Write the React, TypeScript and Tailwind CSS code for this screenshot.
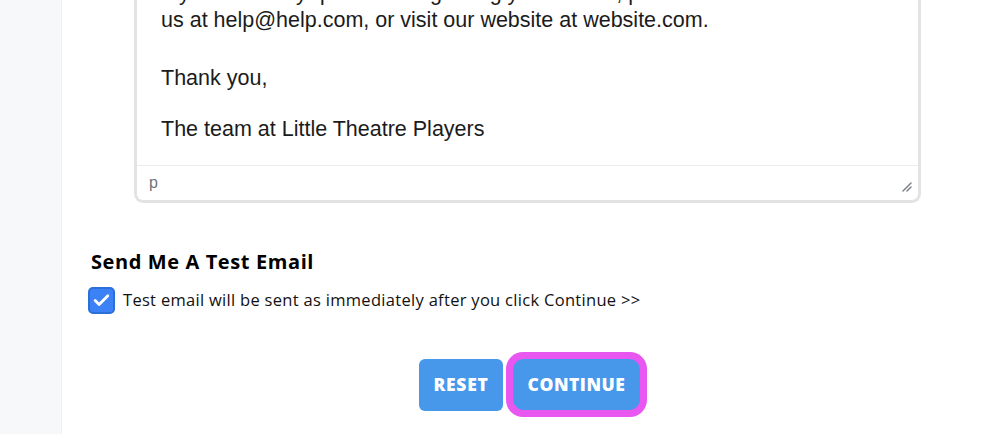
import { Check } from "lucide-react";

const sans = "font-['Liberation_Sans',Arial,sans-serif]";
const poppins = "font-['Open_Sans','Noto_Sans',sans-serif]";

function Editor() {
  return (
    <div className="ml-[72px] w-[787px] rounded-b-[9px] border-x-[3px] border-b-[3px] border-[#e3e3e3] bg-white">
      {/* body, scrolled so the first line is mostly out of view */}
      <div className={`${sans} px-[24px] pb-[22px] text-[21.5px] leading-[27px] text-[#1b1b1b]`}>
        <p>If you have any questions regarding your tickets, please feel free to contact</p>
        <p>us at help@help.com, or visit our website at website.com.</p>
        <p className="mt-[31px]">Thank you,</p>
        <p className="mt-[24px]">The team at Little Theatre Players</p>
      </div>
      <div className="flex h-[35px] items-center justify-between border-t border-[#ececec] pl-[12px] pr-[6px]">
        <span className={`${sans} text-[16px] text-[#6f737a]`}>p</span>
        <svg width="12" height="12" viewBox="0 0 12 12" className="mt-[6px]">
          <path d="M11 3 L3 11 M11 7 L7 11" stroke="#7d8087" strokeWidth="1.5" strokeLinecap="round" />
        </svg>
      </div>
    </div>
  );
}

export default function App() {
  return (
    <div className="flex h-[448px] w-[1004px] overflow-hidden bg-white">
      <div className="h-[434px] w-[62px] shrink-0 border-r border-[#eef0f3] bg-[#f7f8fa]" />
      <div className="flex-1">
        <div className="-mt-[20px]">
          <Editor />

          <h2 className={`${poppins} ml-[29px] mt-[45px] text-[20px] font-bold leading-[28px] tracking-[0.6px] text-black`}>
            Send Me A Test Email
          </h2>

          <label className="ml-[26px] mt-[11px] flex items-center gap-[8px]">
            <span className="flex h-[27px] w-[27px] items-center justify-center rounded-[5px] border-[2px] border-[#2d6fd9] bg-[#3a82f6]">
              <Check className="h-[19px] w-[19px] text-white" strokeWidth={3.5} />
            </span>
            <span className={`${poppins} text-[16.5px] tracking-[0.3px] text-[#111]`}>
              Test email will be sent as immediately after you click Continue &gt;&gt;
            </span>
          </label>

          <div className="mt-[38px] flex items-center justify-center gap-[3px]">
            <button className={`${poppins} h-[52px] w-[84px] rounded-[6px] bg-[#4797ea] text-[17.5px] font-extrabold tracking-[0.7px] text-white`}>
              RESET
            </button>
            <span className="rounded-[17px] bg-[#e957f1] p-[7px]">
              <button className={`${poppins} block h-[51px] w-[127px] rounded-[11px] bg-[#4797ea] text-[17.5px] font-extrabold tracking-[0.5px] text-white`}>
                CONTINUE
              </button>
            </span>
          </div>
        </div>
      </div>
    </div>
  );
}
